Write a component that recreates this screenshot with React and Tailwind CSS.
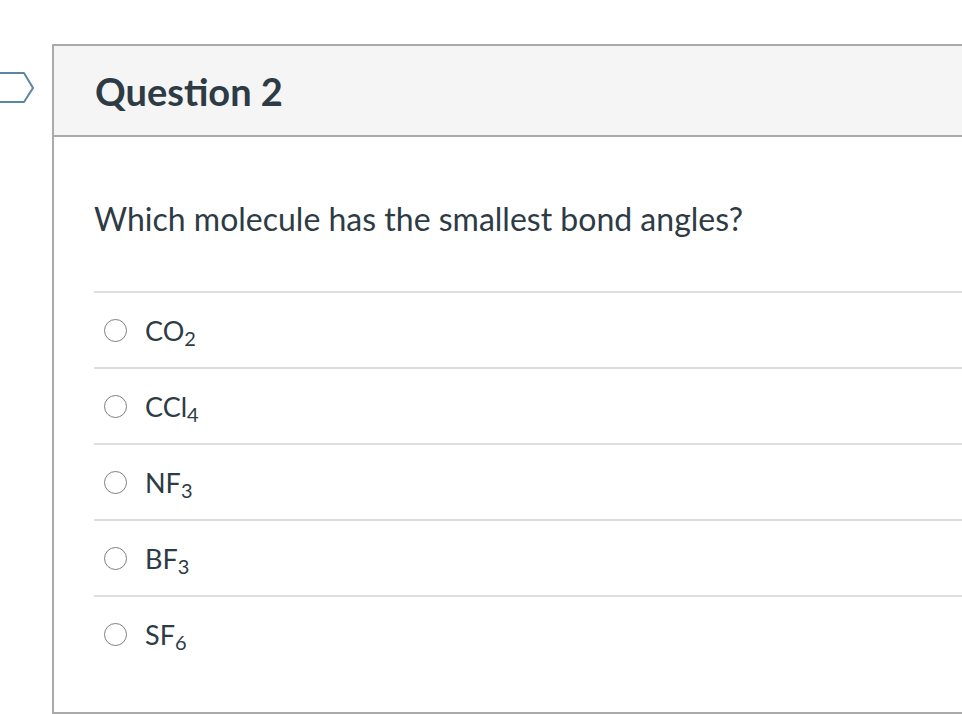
import React from 'react';

const OPTIONS = [
  { id: 'co2', base: 'CO', sub: '2' },
  { id: 'ccl4', base: 'CCl', sub: '4' },
  { id: 'nf3', base: 'NF', sub: '3' },
  { id: 'bf3', base: 'BF', sub: '3' },
  { id: 'sf6', base: 'SF', sub: '6' },
];

export default function App() {
  return (
    <div
      className="relative min-h-[714px] w-[962px] overflow-hidden bg-white text-[#2d3b45]"
      style={{ fontFamily: 'Lato, "Open Sans", sans-serif' }}
    >
      {/* Question flag marker */}
      <svg className="absolute left-0 top-[70px]" width="40" height="36" viewBox="0 0 40 36">
        <path d="M-2 3 H24 L33 18 L24 32 H-2" fill="white" stroke="#5a85a3" strokeWidth="2" strokeLinejoin="round" />
      </svg>

      <div className="flex pt-[44px] pl-[52px]">
        <div className="w-[930px] border-2 border-r-0 border-[#aaaaaa]">
          {/* Header */}
          <div className="flex h-[91px] items-center border-b-2 border-[#aaaaaa] bg-[#f5f5f5] pl-[41px]">
            <h2 className="text-[38px] font-bold leading-none">Question 2</h2>
          </div>

          {/* Body */}
          <div className="pl-[40px] pb-[41px]">
            <p className="pt-[64px] pb-[54px] text-[32px] leading-[36px]">
              Which molecule has the smallest bond angles?
            </p>

            <div>
              {OPTIONS.map((opt) => (
                <label
                  key={opt.id}
                  className="flex h-[76px] items-center gap-[18px] border-t-2 border-[#dddddd] pl-[10px]"
                >
                  <span className="h-[23px] w-[23px] rounded-full border-[1.5px] border-[#808080]" />
                  <span className="text-[27px] leading-none">
                    {opt.base}
                    <sub className="text-[20px]">{opt.sub}</sub>
                  </span>
                </label>
              ))}
            </div>
          </div>
        </div>
      </div>
    </div>
  );
}
